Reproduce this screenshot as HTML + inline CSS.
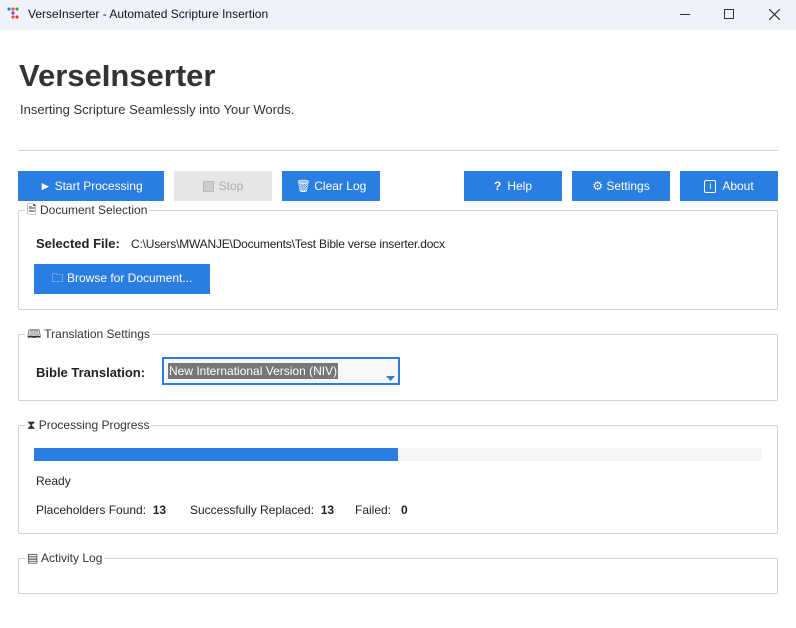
<!DOCTYPE html><html><head><style>
*{margin:0;padding:0;box-sizing:border-box}
body{width:796px;height:628px;background:#fff;font-family:"Liberation Sans",sans-serif;color:#222;position:relative;overflow:hidden;font-size:12px}
.a{position:absolute}
.tb{left:0;top:0;width:796px;height:30px;background:#eff3f9}
.btn{position:absolute;background:#2a7de1;color:#fff;font-size:12px;display:flex;align-items:center;justify-content:center;height:30px;top:171px}
.grp{position:absolute;left:18px;width:760px;border:1px solid #cdd3da;border-radius:2px}
.lg{position:absolute;left:6px;top:-8px;background:#fff;padding:0 2px 0 2px;font-size:12px;color:#333;line-height:14px;white-space:nowrap}
b{font-weight:bold}
</style></head><body>
<div class="a tb"></div>
<svg class="a" style="left:7px;top:7px" width="14" height="16"><circle cx="2" cy="2" r="1.6" fill="#2a7de1"/><circle cx="6" cy="2" r="1.6" fill="#e53"/><circle cx="10" cy="2" r="1.6" fill="#3a3"/><circle cx="6" cy="6" r="1.6" fill="#93c"/><circle cx="6" cy="10" r="1.6" fill="#e53"/><circle cx="10" cy="10" r="1.6" fill="#e33"/></svg>
<div class="a" style="left:28px;top:7px;font-size:12px;color:#111">VerseInserter - Automated Scripture Insertion</div>
<div class="a" style="left:680px;top:14px;width:10px;height:1px;background:#333"></div>
<div class="a" style="left:724px;top:9px;width:10px;height:10px;border:1px solid #333"></div>
<svg class="a" style="left:769px;top:9px" width="11" height="11"><path d="M0 0L11 11M11 0L0 11" stroke="#333" stroke-width="1.2"/></svg>
<div class="a" style="left:19px;top:58px;font-size:31px;font-weight:bold;color:#333">VerseInserter</div>
<div class="a" style="left:20px;top:102px;font-size:13px;color:#333">Inserting Scripture Seamlessly into Your Words.</div>
<div class="a" style="left:18px;top:150px;width:760px;height:1px;background:#cdd3da"></div>
<div class="btn" style="left:18px;width:146px">► Start Processing</div>
<div class="btn" style="left:174px;width:98px;background:#e6e6e6;color:#aaa"><span style="display:inline-block;width:11px;height:11px;border:1px solid #bbb;background:#ccc;margin-right:5px"></span>Stop</div>
<div class="btn" style="left:282px;width:98px">🗑 Clear Log</div>
<div class="btn" style="left:464px;width:98px"><b style="margin-right:6px">?</b>Help</div>
<div class="btn" style="left:572px;width:98px">⚙ Settings</div>
<div class="btn" style="left:680px;width:98px"><span style="display:inline-block;width:12px;height:13px;border:1px solid #fff;border-radius:2px;font-size:9px;text-align:center;line-height:11px;margin-right:6px">i</span>About</div>
<div class="grp" style="top:210px;height:100px"><div class="lg">🗎 Document Selection</div></div>
<div class="a" style="left:36px;top:236px;font-size:13px"><b>Selected File:</b></div>
<div class="a" style="left:131px;top:237px;font-size:12px;letter-spacing:-0.2px">C:\Users\MWANJE\Documents\Test Bible verse inserter.docx</div>
<div class="btn" style="left:34px;top:264px;width:176px">🗀 Browse for Document...</div>
<div class="grp" style="top:334px;height:67px"><div class="lg">🕮 Translation Settings</div></div>
<div class="a" style="left:36px;top:365px;font-size:13px"><b>Bible Translation:</b></div>
<div class="a" style="left:162px;top:357px;width:238px;height:28px;border:2px solid #2a7de1;background:#f7f8fa"></div>
<div class="a" style="left:168px;top:363px;background:#777;color:#fff;font-size:12px;padding:1px 1px">New International Version (NIV)</div>
<svg class="a" style="left:386px;top:376px" width="9" height="5"><path d="M0 0H9L4.5 5Z" fill="#2a7de1"/></svg>
<div class="grp" style="top:425px;height:109px"><div class="lg">⧗ Processing Progress</div></div>
<div class="a" style="left:34px;top:448px;width:728px;height:13px;background:#f4f5f7"></div>
<div class="a" style="left:34px;top:448px;width:364px;height:13px;background:#2a7de1"></div>
<div class="a" style="left:36px;top:474px;font-size:12px">Ready</div>
<div class="a" style="left:36px;top:503px;font-size:12px">Placeholders Found:&nbsp; <b>13</b></div>
<div class="a" style="left:190px;top:503px;font-size:12px">Successfully Replaced:&nbsp; <b>13</b></div>
<div class="a" style="left:355px;top:503px;font-size:12px">Failed:&nbsp;&nbsp; <b>0</b></div>
<div class="grp" style="top:558px;height:36px"><div class="lg">▤ Activity Log</div></div>
</body></html>
